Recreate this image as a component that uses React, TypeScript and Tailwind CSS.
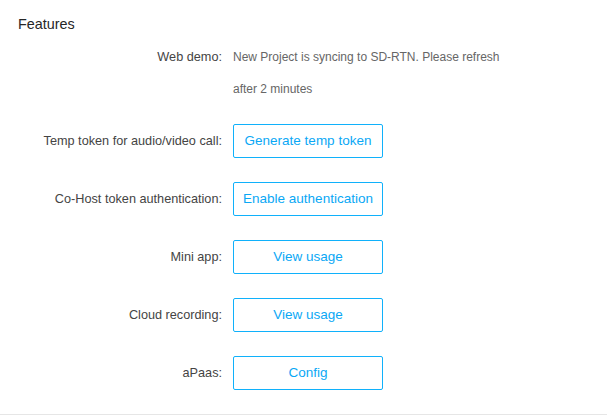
import React from "react";

const font = { fontFamily: '"Liberation Sans", Arial, Helvetica, sans-serif' };

function Row({ label, children }: { label: string; children: React.ReactNode }) {
  return (
    <div className="flex items-center">
      <div className="w-[204px] shrink-0 text-right text-[12.7px] leading-[34px] text-[#444444]">{label}</div>
      <div className="ml-[11px]">{children}</div>
    </div>
  );
}

function Btn({ children }: { children: React.ReactNode }) {
  return (
    <button className="flex h-[34px] w-[150px] items-center justify-center rounded-[2px] border border-[#10b1fb] bg-white text-[13.5px] text-[#0aa8f5]">
      {children}
    </button>
  );
}

export default function App() {
  return (
    <div style={font} className="box-border h-[415px] w-full border-b border-[#e6e6e6] bg-white px-[18px] pt-[14px]">
      <h2 className="text-[14.4px] font-medium leading-[20px] text-[#262626]">Features</h2>
      <div className="mt-[7px] flex">
        <div className="w-[204px] shrink-0 text-right text-[12.7px] leading-[32px] text-[#444444]">Web demo:</div>
        <div className="ml-[11px] w-[280px] text-[12px] leading-[32px] text-[#666666]">
          New Project is syncing to SD-RTN. Please refresh after 2 minutes
        </div>
      </div>
      <div className="mt-[19px] flex flex-col gap-[24px]">
        <Row label="Temp token for audio/video call:">
          <Btn>Generate temp token</Btn>
        </Row>
        <Row label="Co-Host token authentication:">
          <Btn>Enable authentication</Btn>
        </Row>
        <Row label="Mini app:">
          <Btn>View usage</Btn>
        </Row>
        <Row label="Cloud recording:">
          <Btn>View usage</Btn>
        </Row>
        <Row label="aPaas:">
          <Btn>Config</Btn>
        </Row>
      </div>
    </div>
  );
}
